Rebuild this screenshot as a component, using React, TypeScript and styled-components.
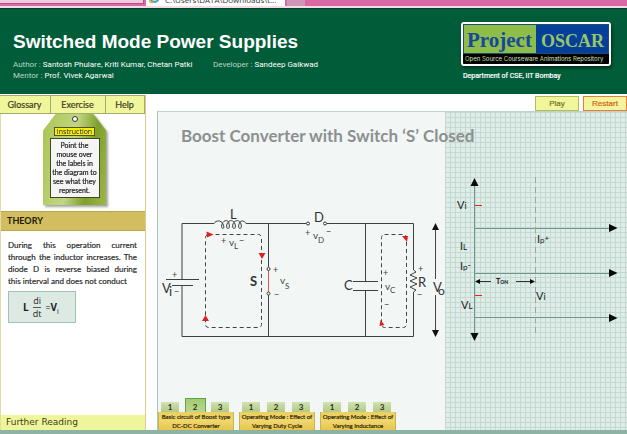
import React from "react";
import styled, { createGlobalStyle } from "styled-components";

const HUMANIST = 'Lato, "Open Sans", sans-serif';
const GROTESK = '"Liberation Sans", Arial, sans-serif';
const SMALL_GROTESK = 'Roboto, "Liberation Sans", sans-serif';

const GlobalStyle = createGlobalStyle`
  *, *::before, *::after { box-sizing: border-box; }
  body { margin: 0; background: #fff; font-family: ${HUMANIST}; color: #222; }
  button, h1, h2, p, dl, dd { margin: 0; padding: 0; font: inherit; }
`;

const Page = styled.div`
  display: flex;
  flex-direction: column;
  min-height: 100vh;
  border-bottom: 4px solid #8cb3a3;
`;

const BrowserTabs = styled.div`
  display: flex;
  align-items: flex-start;
  gap: 2px;
  height: 8px;
  overflow: hidden;
  background: #d968a4;
  border-bottom: 2px solid #f0dce6;
`;

const BackTab = styled.span<{ $wide?: boolean }>`
  width: ${(p) => (p.$wide ? 144 : 18)}px;
  height: ${(p) => (p.$wide ? 4 : 6)}px;
  background: ${(p) => (p.$wide ? "#efcbdd" : "#d395b5")};
  border: 0 solid #b64f86;
  border-width: ${(p) => (p.$wide ? "0 1px 1px 0" : "0")};
`;

const FrontTab = styled.span`
  display: flex;
  align-items: flex-end;
  gap: 5px;
  width: 139px;
  height: 6px;
  padding: 0 0 2px 3px;
  background: #fff;
  color: #333;
  font: 8px/9px "Open Sans", sans-serif;
  white-space: nowrap;
`;

const Header = styled.header`
  display: flex;
  justify-content: space-between;
  align-items: flex-start;
  height: 86px;
  padding: 13px 16px 0 13px;
  background: #015c39;
  border-top: 1px solid #0a3f2a;
  color: #fff;
  font-family: ${SMALL_GROTESK};
`;

const CourseTitle = styled.h1`
  padding-top: 8px;
  font: 700 19px/24px ${GROTESK};
  white-space: nowrap;
`;

const Credits = styled.dl`
  display: grid;
  grid-template-columns: 200px auto;
  padding-top: 5px;
  font-size: 8px;
  line-height: 11px;
  white-space: nowrap;
`;

const Credit = styled.div`
  display: flex;
  gap: 2px;
  dt { color: #b9d6c6; }
  dd { color: #fff; }
`;

const Institute = styled.div`
  width: 150px;
`;

const Department = styled.p`
  padding-left: 2px;
  font-size: 7px;
  line-height: 12px;
  -webkit-text-stroke: 0.2px #fff;
`;

const Logo = styled.div`
  margin-bottom: 4px;
  border: 2px solid #fff;
  border-radius: 3px;
  background: #000;
  box-shadow: 1px 2px 3px #00301c;
`;

const LogoNames = styled.div`
  display: grid;
  grid-template-columns: 1fr 1fr;
  height: 30px;
  background: linear-gradient(90deg, #8fbd4a 50%, #063f99 50%);
  border: 1px solid #1b4f6f;
`;

const LogoArt = styled.svg`
  display: block;
  width: 100%;
  height: 100%;
  overflow: visible;
`;

const LogoTagline = styled.p`
  height: 10px;
  padding-left: 2px;
  color: #dce3c0;
  font: 6px/9px Inter, sans-serif;
  white-space: nowrap;
  b { color: #c5dc4e; font-weight: 400; }
`;

const Content = styled.main`
  display: grid;
  grid-template-columns: 146px 1fr;
  column-gap: 11px;
  flex: 1;
  padding-top: 1px;
`;

const Sidebar = styled.aside`
  display: flex;
  flex-direction: column;
  border-right: 1px solid #dccb8d;
  border-left: 1px solid #e5dba9;
`;

const Menu = styled.nav`
  display: grid;
  grid-template-columns: 51px 55px 1fr;
  height: 19px;
  margin-left: -1px;
`;

const MenuButton = styled.button`
  padding-right: 1px;
  background: #f0f69c;
  border: 1px solid #a5ab6d;
  border-left-width: 0;
  color: #3c401c;
  font: 9px/15px ${HUMANIST};
  -webkit-text-stroke: 0.2px;
  cursor: pointer;
`;

const TagArea = styled.section`
  display: flex;
  justify-content: center;
  height: 97px;
  padding-left: 3px;
`;

const Tag = styled.div`
  display: flex;
  flex-direction: column;
  align-items: center;
  width: 63px;
  height: 91px;
  padding-top: 2px;
  background: linear-gradient(100deg, #a9c454, #c2d683 45%, #7f9f2b 72%, #9cb74b);
  clip-path: polygon(20% 0, 80% 0, 100% 18%, 100% 100%, 0 100%, 0 18%);
`;

const TagShadow = styled.div`
  filter: drop-shadow(2px 2px 1px #a5a5a0);
`;

const Hole = styled.span`
  width: 6px;
  height: 6px;
  border: 1px solid #333;
  border-radius: 50%;
  background: #fff;
`;

const TagLabel = styled.h2`
  width: 41px;
  height: 9px;
  margin-top: 5px;
  border: 1px solid #55540c;
  background: #f4ed12;
  font: 7px/7px "Open Sans", sans-serif;
  text-align: center;
`;

const TagText = styled.p`
  width: 50px;
  height: 60px;
  margin-top: 2px;
  padding-top: 2px;
  border: 1px solid #3e4623;
  background: #f5f5f5;
  color: #222;
  font: 7px/9px ${HUMANIST};
  -webkit-text-stroke: 0.2px;
  text-align: center;
  white-space: pre;
`;

const SectionTitle = styled.h2`
  height: 20px;
  padding-left: 6px;
  background: #d2be61;
  border: 1px solid #bba74c;
  border-width: 1px 0;
  color: #1f1b05;
  font: 700 9px/18px ${HUMANIST};
`;

const Theory = styled.section`
  flex: 1;
  padding: 8px 8px 0 7px;
`;

const TheoryText = styled.p`
  color: #2c2c2c;
  font: 8px/12px ${HUMANIST};
  -webkit-text-stroke: 0.2px;
  text-align: justify;
`;

const Equation = styled.div`
  display: flex;
  align-items: center;
  gap: 4px;
  width: 68px;
  height: 32px;
  margin-top: 4px;
  padding-left: 14px;
  border: 1px solid #9fc3b6;
  background: #dceae3;
  color: #222;
  font: 9px/12px "Open Sans", sans-serif;
  b { font-size: 10px; }
  sub { font-size: 7px; line-height: 0; }
`;

const Fraction = styled.span`
  display: flex;
  flex-direction: column;
  text-align: center;
  span:first-child { border-bottom: 1px solid #555; }
`;

const FurtherReading = styled.a`
  padding-left: 5px;
  background: #eef59b;
  color: #3c4219;
  font: 9px/15px "DejaVu Sans", sans-serif;
  text-decoration: none;
`;

const Workspace = styled.section`
  display: flex;
  flex-direction: column;
  min-width: 0;
`;

const Controls = styled.div`
  display: flex;
  justify-content: flex-end;
  gap: 4px;
  height: 16px;
  padding-top: 1px;
`;

const ControlButton = styled.button<{ $alert?: boolean }>`
  width: 44px;
  height: 15px;
  border: 1px solid ${(p) => (p.$alert ? "#ee7b3c" : "#b3bd57")};
  background: #f1f59b;
  color: ${(p) => (p.$alert ? "#dc5a1f" : "#6c761f")};
  font: 8px/14px ${GROTESK};
  -webkit-text-stroke: 0.2px;
  cursor: pointer;
`;

const Stage = styled.div`
  display: grid;
  grid-template-columns: 287px 1fr;
  flex: 1;
  border-top: 1px solid #bcd2ca;
  border-left: 1px solid #a8c6ba;
`;

const CircuitPane = styled.div`
  display: flex;
  flex-direction: column;
  min-width: 0;
  background: #f2f6f5;
`;

const GraphPane = styled.div`
  min-width: 0;
  padding-top: 58px;
  background-color: #dfece8;
  background-image: linear-gradient(#c3dad3 1px, transparent 1px),
    linear-gradient(90deg, #c3dad3 1px, transparent 1px);
  background-size: 5px 5px;
`;

const StageTitle = styled.h2`
  position: relative;
  z-index: 1;
  padding: 12px 0 52px 23px;
  color: #8d9090;
  font: 700 17px/24px ${HUMANIST};
  white-space: nowrap;
`;

const Drawing = styled.svg`
  position: relative;
  z-index: 1;
  display: block;
  overflow: visible;
  font-family: ${HUMANIST};
`;

const Steps = styled.div`
  display: flex;
  gap: 5px;
  margin-top: auto;
`;

const StepGroup = styled.div`
  width: 76px;
`;

const StepTabs = styled.div`
  display: flex;
  align-items: flex-end;
  justify-content: space-between;
  height: 14px;
  padding: 0 5px 0 3px;
`;

const StepTab = styled.button<{ $active?: boolean }>`
  width: ${(p) => (p.$active ? 21 : 18)}px;
  height: ${(p) => (p.$active ? 14 : 10)}px;
  border: 0 solid #55aa43;
  border-width: ${(p) => (p.$active ? "1px 1px 0" : "0")};
  padding-top: ${(p) => (p.$active ? 3 : 0)}px;
  background: ${(p) => (p.$active ? "linear-gradient(#a5ca72, #b9d78d)" : "linear-gradient(#d3e1b3, #b1ca84)")};
  color: #26320f;
  font: 700 8px/10px ${HUMANIST};
  cursor: pointer;
`;

const StepCaption = styled.p`
  height: 18px;
  background: linear-gradient(#eccf61, #f0d66e 50%, #e8c54b);
  border: 0 solid #c9b452;
  border-width: 0 1px;
  color: #302806;
  font: 6px/9px ${HUMANIST};
  -webkit-text-stroke: 0.2px;
  text-align: center;
  white-space: pre;
`;

const Circuit = () => (
  <Drawing width="286" height="150" viewBox="158 200 286 150" role="img" aria-label="Boost converter circuit">
    <g fill="none" stroke="#3d4141" strokeWidth="1">
      <path d="M182 280V223.500H214C216 220 221 220 223 224C226 230 220 230 222 224C224 219 229 220 229 224C231 230 225 230 227 224C229 219 234 220 235 224C237 230 231 230 233 224C235 219 240 220 241 224C243 230 237 230 239 224C240 220 244 220 246 223.500H306M327 223.500H413.500V270L416 272L410 275L417 278L410 281L417 284L410 287L416 290L413.500 292V336.500H182V286" />
      <path d="M166 279.500H199M172 285.500H193M268.500 224V267M268.500 295V336M365.500 224V281M353 281.500H378M353 290.500H378M365.500 291V336" />
      <path d="M435.500 229V279M435.500 295V331" stroke="#444" />
    </g>
    <path d="M268.500 270V292" stroke="#e25555" />
    <g fill="#fff" stroke="#333">
      <circle cx="308" cy="223.500" r="1.500" />
      <circle cx="325" cy="223.500" r="1.500" />
      <circle cx="268.500" cy="269" r="1.500" />
      <circle cx="268.500" cy="293.500" r="1.500" />
    </g>
    <g fill="none" stroke="#444" strokeWidth="1" strokeDasharray="4 3">
      <rect x="205.500" y="234.500" width="56" height="93" rx="3" />
      <rect x="381.500" y="234.500" width="25" height="93" rx="3" />
    </g>
    <g fill="#dd1f1f">
      <path d="M206.500 231.500l7 3l-6.500 3zM258.500 253h7l-3.500 6zM202 321h7l-3.500-6zM402 236h6l-1 6zM379.500 326l1-6l4 5z" />
    </g>
    <path fill="#111" d="M435.500 223l3.500 7h-7zM435.500 337l3.500-7h-7z" />
    <g fill="#333" fontSize="13">
      <text x="230" y="219">L</text>
      <text x="314" y="222">D</text>
      <text x="162" y="293">V</text>
      <text x="169" y="296">i</text>
      <text x="344" y="290">C</text>
      <text x="418" y="287">R</text>
      <text x="433" y="292">V</text>
      <text x="438" y="295" fontSize="12">o</text>
      <text x="250" y="286" fontWeight="700">S</text>
    </g>
    <g fill="#444" fontSize="10">
      <text x="229" y="246">v</text>
      <text x="234" y="249" fontSize="8">L</text>
      <text x="313" y="239">v</text>
      <text x="318" y="243" fontSize="8">D</text>
      <text x="280" y="284">v</text>
      <text x="285" y="289" fontSize="8">S</text>
      <text x="385" y="290">v</text>
      <text x="390" y="293" fontSize="8">C</text>
    </g>
    <g fill="#444" fontSize="9">
      <text x="221" y="244">+</text>
      <text x="239" y="244">−</text>
      <text x="172" y="278">+</text>
      <text x="174" y="295">−</text>
      <text x="305" y="236">+</text>
      <text x="326" y="235">−</text>
      <text x="273" y="273">+</text>
      <text x="274" y="298">−</text>
      <text x="383" y="276">+</text>
      <text x="384" y="308">−</text>
      <text x="418" y="272">+</text>
      <text x="417" y="298">−</text>
    </g>
  </Drawing>
);

const Waveforms = () => (
  <Drawing width="182" height="180" viewBox="445 170 182 180" role="img" aria-label="Voltage and current graphs">
    <g stroke="#6f978b">
      <path d="M474.500 184V334M474 228.500H611M474 273.500H611M474 317.500H611" />
      <path d="M535.500 177V337" stroke="#94aaa4" strokeDasharray="6 4" />
    </g>
    <path d="M475 205.500H482M475 295.500H482" stroke="#f02020" />
    <path d="M480 281.500H491M516 281.500H530" stroke="#333" />
    <g fill="#050808">
      <path d="M474.500 178l4 8h-8zM474.500 341l4-8h-8zM617.500 228l-8.500-4v8zM617.500 273l-8.500-4v8zM617.500 318l-8.500-4v8zM475 281.500l5-2.500v5zM535 281.500l-5-2.500v5z" />
    </g>
    <g fill="#222" fontSize="11">
      <text x="457" y="209">V<tspan fontSize="9">i</tspan></text>
      <text x="460" y="250">I<tspan fontSize="8">L</tspan></text>
      <text x="460" y="270">I<tspan fontSize="8">p</tspan><tspan fontSize="9" dy="-2">-</tspan></text>
      <text x="461" y="309">V<tspan fontSize="8">L</tspan></text>
      <text x="537" y="243">I<tspan fontSize="8">p</tspan><tspan fontSize="8" dy="-2">+</tspan></text>
      <text x="536" y="300">V<tspan fontSize="9">i</tspan></text>
      <text x="496" y="284" fontSize="7" fontWeight="900">T<tspan fontSize="5">ON</tspan></text>
    </g>
  </Drawing>
);

const stepGroups = [
  { caption: "Basic circuit of Boost type\nDC-DC Converter", active: 2 },
  { caption: "Operating Mode : Effect of\nVarying Duty Cycle", active: 0 },
  { caption: "Operating Mode : Effect of\nVarying Inductance", active: 0 },
];

export default function App() {
  return (
    <>
      <GlobalStyle />
      <Page>
        <BrowserTabs>
          <BackTab $wide />
          <FrontTab>
            <svg width="11" height="11" viewBox="0 0 11 11" aria-hidden="true">
              <circle cx="5.500" cy="5" r="4" fill="#bfe5f7" stroke="#3d9ccc" strokeWidth="2" />
              <path d="M1 7C0 10 3 10 5 9" fill="none" stroke="#e3b53c" strokeWidth="1.500" />
            </svg>
            C:\Users\DATA\Downloads\t...
          </FrontTab>
          <BackTab />
        </BrowserTabs>
        <Header>
          <div>
            <CourseTitle>Switched Mode Power Supplies</CourseTitle>
            <Credits>
              <Credit><dt>Author :</dt><dd>Santosh Phulare, Kriti Kumar, Chetan Patki</dd></Credit>
              <Credit><dt>Developer :</dt><dd>Sandeep Gaikwad</dd></Credit>
              <Credit><dt>Mentor :</dt><dd>Prof. Vivek Agarwal</dd></Credit>
            </Credits>
          </div>
          <Institute>
            <Logo>
              <LogoNames>
                <LogoArt viewBox="0 0 72 28">
                  <text x="3" y="22" fill="#15499a" fontFamily="Liberation Serif, serif" fontSize="21" fontWeight="700">Project</text>
                </LogoArt>
                <LogoArt viewBox="0 0 72 28">
                  <text x="5" y="22" fill="#97c66a" fontFamily="Liberation Serif, serif" fontSize="18" fontWeight="700">OSCAR</text>
                </LogoArt>
              </LogoNames>
              <LogoTagline><b>O</b>pen <b>S</b>ource <b>C</b>ourseware <b>A</b>nimations <b>R</b>epository</LogoTagline>
            </Logo>
            <Department>Department of CSE, IIT Bombay</Department>
          </Institute>
        </Header>
        <Content>
          <Sidebar>
            <Menu>
              <MenuButton>Glossary</MenuButton>
              <MenuButton>Exercise</MenuButton>
              <MenuButton>Help</MenuButton>
            </Menu>
            <TagArea>
              <TagShadow>
                <Tag>
                  <Hole />
                  <TagLabel>Instruction</TagLabel>
                  <TagText>{"Point the\nmouse over\nthe labels in\nthe diagram to\nsee what they\nrepresent."}</TagText>
                </Tag>
              </TagShadow>
            </TagArea>
            <SectionTitle>THEORY</SectionTitle>
            <Theory>
              <TheoryText>
                During this operation current through the inductor increases. The diode D is reverse biased during this&nbsp;interval and does not conduct
              </TheoryText>
              <Equation>
                <b>L</b>
                <Fraction><span>di</span><span>dt</span></Fraction>
                <span>=<b>V</b><sub>i</sub></span>
              </Equation>
            </Theory>
            <FurtherReading href="#reading">Further Reading</FurtherReading>
          </Sidebar>
          <Workspace>
            <Controls>
              <ControlButton>Play</ControlButton>
              <ControlButton $alert>Restart</ControlButton>
            </Controls>
            <Stage>
              <CircuitPane>
                <StageTitle>Boost Converter with Switch ‘S’ Closed</StageTitle>
                <Circuit />
                <Steps>
                  {stepGroups.map((group) => (
                    <StepGroup key={group.caption}>
                      <StepTabs>
                        {[1, 2, 3].map((n) => (
                          <StepTab key={n} $active={group.active === n}>{n}</StepTab>
                        ))}
                      </StepTabs>
                      <StepCaption>{group.caption}</StepCaption>
                    </StepGroup>
                  ))}
                </Steps>
              </CircuitPane>
              <GraphPane>
                <Waveforms />
              </GraphPane>
            </Stage>
          </Workspace>
        </Content>
      </Page>
    </>
  );
}
